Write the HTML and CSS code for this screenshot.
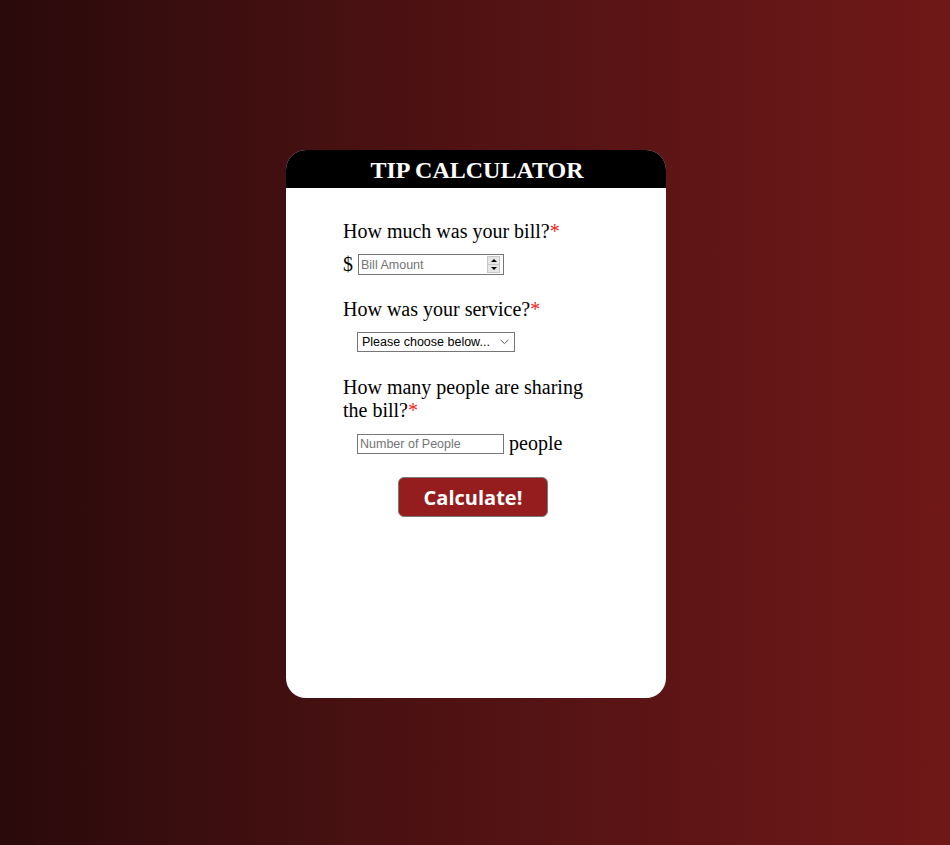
FILE: index.html
```html
<!DOCTYPE html>
<html>
<head>
<meta charset="utf-8">
<link rel="stylesheet" href="styles.css">
</head>
<body>
<div class="card">
  <div class="header">TIP CALCULATOR</div>
  <div class="content">
    <div class="question">How much was your bill?<span class="req">*</span></div>
    <div class="row row-bill">
      <span class="dollar">$</span>
      <div class="numbox">
        <input class="field bare" type="text" placeholder="Bill Amount">
        <div class="spin">
          <div class="spin-btn"><span class="tri-up"></span></div>
          <div class="spin-btn"><span class="tri-down"></span></div>
        </div>
      </div>
    </div>

    <div class="question q2">How was your service?<span class="req">*</span></div>
    <div class="row indent">
      <div class="select">
        <span>Please choose below...</span>
        <svg class="chev" width="9" height="6" viewBox="0 0 9 6"><path d="M0.5 0.8 L4.5 4.6 L8.5 0.8" fill="none" stroke="#555" stroke-width="1"/></svg>
      </div>
    </div>

    <div class="question q3">How many people are sharing the bill?<span class="req">*</span></div>
    <div class="row indent row-people">
      <input class="field people-input" type="text" placeholder="Number of People">
      <span class="people">people</span>
    </div>

    <div class="btn-row">
      <button class="calc">Calculate!</button>
    </div>
  </div>
</div>
</body>
</html>
```

FILE: styles.css
```css
html, body {
  margin: 0;
  padding: 0;
  height: 100%;
}
body {
  background: linear-gradient(to right, #2a0a0b 0%, #4a1112 40%, #701818 100%);
  font-family: "Liberation Serif", "Times New Roman", serif;
  overflow: hidden;
}
.card {
  width: 380px;
  height: 548px;
  margin: 150px auto 0;
  background: #fff;
  border-radius: 20px;
  overflow: hidden;
  position: relative;
  left: 1px;
}
.header {
  background: #000;
  color: #fff;
  font-weight: bold;
  font-size: 24px;
  height: 38px;
  line-height: 40px;
  text-align: center;
  padding-left: 2px;
}
.content {
  padding: 32px 57px 0 57px;
  display: flex;
  flex-direction: column;
}
.question {
  font-size: 20px;
  line-height: 23px;
  color: #000;
}
.req {
  color: #f21c1c;
}
.q2 { margin-top: 22px; }
.q3 { margin-top: 24px; width: 250px; }
.row {
  display: flex;
  align-items: center;
  margin-top: 10px;
}
.indent { padding-left: 14px; }
.dollar {
  font-size: 20px;
  width: 15px;
}
.numbox {
  display: flex;
  align-items: center;
  width: 144px;
  height: 19px;
  border: 1px solid #767676;
  background: #fff;
}
.field {
  font-family: "Liberation Sans", Arial, sans-serif;
  font-size: 12.5px;
  color: #000;
  padding: 0 2px;
  outline: none;
}
.field::placeholder {
  color: #757575;
}
.bare {
  border: 0;
  width: 120px;
  height: 19px;
  background: transparent;
}
.spin {
  margin-left: auto;
  margin-right: 3px;
  width: 13px;
  height: 17px;
  display: flex;
  flex-direction: column;
  background: #e6e6e6;
  border: 1px solid #c8c8c8;
  box-sizing: border-box;
}
.spin-btn {
  flex: 1;
  display: flex;
  align-items: center;
  justify-content: center;
}
.spin-btn + .spin-btn {
  border-top: 1px solid #c8c8c8;
}
.tri-up {
  width: 0; height: 0;
  border-left: 3px solid transparent;
  border-right: 3px solid transparent;
  border-bottom: 3px solid #000;
}
.tri-down {
  width: 0; height: 0;
  border-left: 3px solid transparent;
  border-right: 3px solid transparent;
  border-top: 3px solid #000;
}
.select {
  margin-top: 1px;
  height: 18px;
  border: 1px solid #767676;
  display: flex;
  align-items: center;
  font-family: "Liberation Sans", Arial, sans-serif;
  font-size: 12.5px;
  color: #000;
  padding-left: 4px;
  box-sizing: content-box;
  width: 152px;
}
.chev {
  margin-left: auto;
  margin-right: 5px;
}
.people-input {
  width: 141px;
  height: 18px;
  border: 1px solid #767676;
  background: #fff;
  box-sizing: content-box;
}
.people {
  font-size: 20px;
  margin-left: 5px;
}
.btn-row {
  display: flex;
  justify-content: center;
  margin-top: 22px;
  padding-right: 6px;
}
.calc {
  width: 150px;
  height: 40px;
  background: #951d1d;
  color: #fff;
  border: 1px solid #7a7a7a;
  border-radius: 6px;
  font-family: "Open Sans", "DejaVu Sans", sans-serif;
  font-weight: bold;
  font-size: 20px;
  padding: 0;
}
```
